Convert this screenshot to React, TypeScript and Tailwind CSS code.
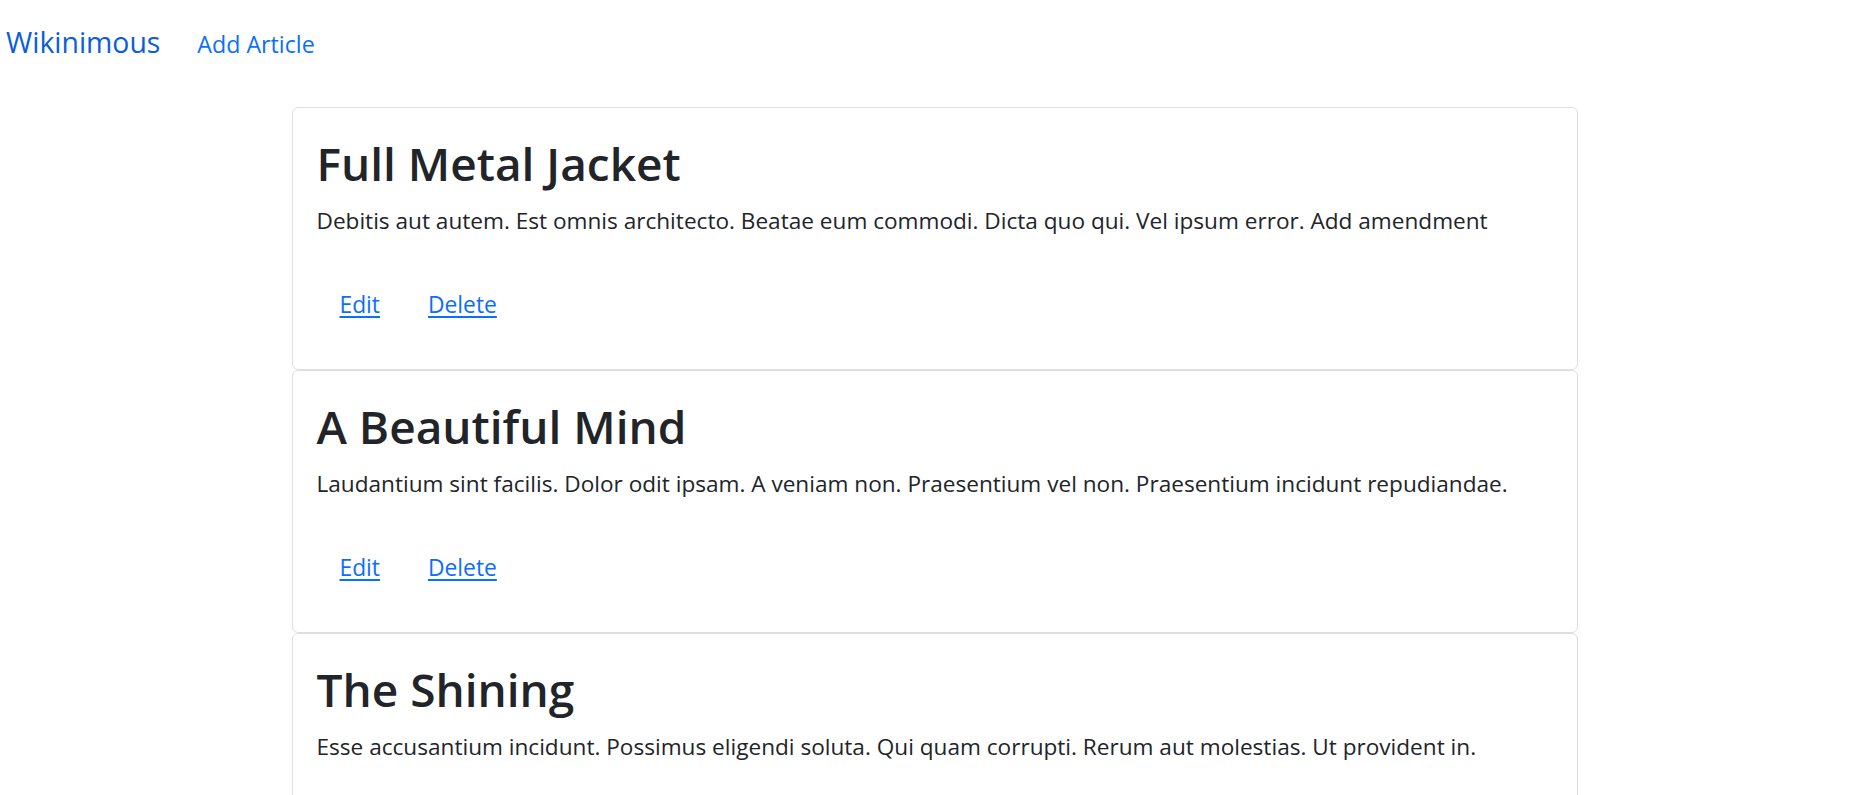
import React from 'react';

interface Article {
  id: number;
  title: string;
  body: string;
}

const ARTICLES: Article[] = [
  {
    id: 1,
    title: 'Full Metal Jacket',
    body: 'Debitis aut autem. Est omnis architecto. Beatae eum commodi. Dicta quo qui. Vel ipsum error. Add amendment',
  },
  {
    id: 2,
    title: 'A Beautiful Mind',
    body: 'Laudantium sint facilis. Dolor odit ipsam. A veniam non. Praesentium vel non. Praesentium incidunt repudiandae.',
  },
  {
    id: 3,
    title: 'The Shining',
    body: 'Esse accusantium incidunt. Possimus eligendi soluta. Qui quam corrupti. Rerum aut molestias. Ut provident in.',
  },
];

const ArticleCard: React.FC<{ article: Article }> = ({ article }) => (
  <div className="border border-[#dfdfdf] rounded-[6px] bg-white pl-[24px] pr-[24px] pt-[26px] pb-[49px]">
    <h1 className="text-[46px] leading-[58px] font-semibold text-[#212529]">{article.title}</h1>
    <p className="mt-[14px] text-[22.6px] leading-[30px] text-[#212529]">{article.body}</p>
    {/* Actions */}
    <div className="mt-[54px] flex gap-[48px] pl-[23px] text-[22.8px] leading-[30px]">
      <a href="#" className="text-[#0d6efd] underline underline-offset-[3px]">Edit</a>
      <a href="#" className="text-[#0d6efd] underline underline-offset-[3px]">Delete</a>
    </div>
  </div>
);

export default function App() {
  return (
    <div className="min-h-screen bg-white" style={{ fontFamily: '"Open Sans", "Noto Sans", sans-serif' }}>
      {/* Navbar */}
      <nav className="flex items-baseline gap-[37px] px-[6px] pt-[22px] h-[107px]">
        <a href="#" className="text-[28.4px] leading-[40px] text-[#0b5ed7]">Wikinimous</a>
        <a href="#" className="text-[23.2px] leading-[40px] text-[#0d6efd]">Add Article</a>
      </nav>

      {/* Articles */}
      <main className="mx-auto w-[1286px]">
        {ARTICLES.map((a) => (
          <ArticleCard key={a.id} article={a} />
        ))}
      </main>
    </div>
  );
}
